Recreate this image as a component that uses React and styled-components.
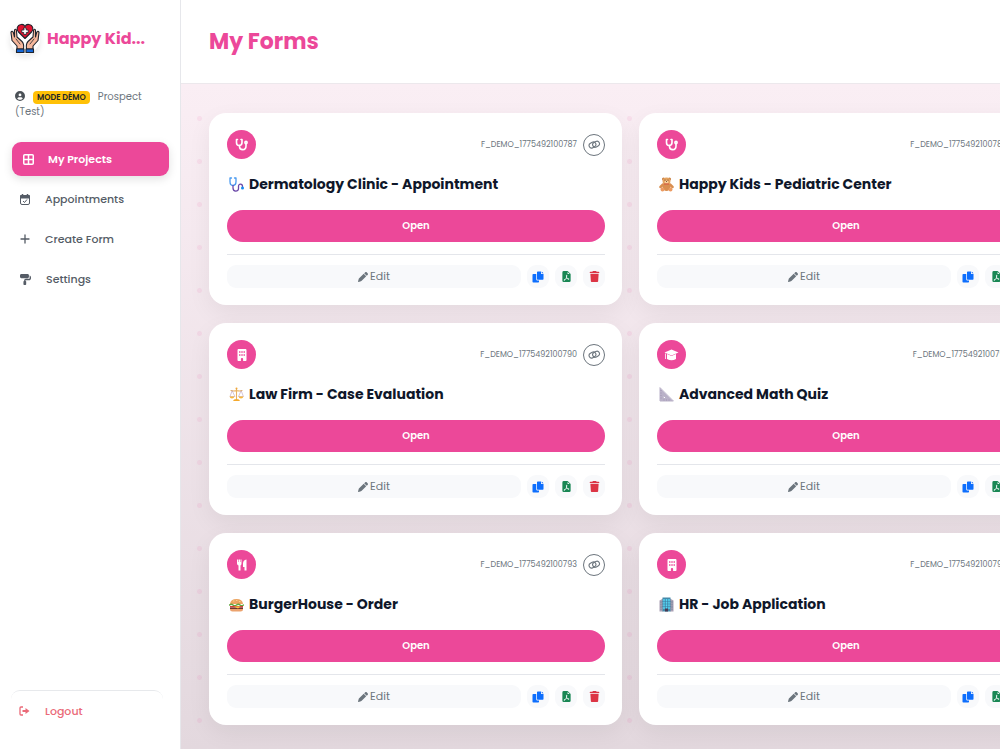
import React from "react";
import styled, { createGlobalStyle } from "styled-components";
import { FaBuilding, FaCircleUser, FaPaintRoller, FaPen, FaTrash } from "react-icons/fa6";
import { BsFileEarmarkPdfFill } from "react-icons/bs";

const pink = "#ec4899";

const GlobalStyle = createGlobalStyle`
  *, *::before, *::after { box-sizing: border-box; }
  body {
    margin: 0;
    overflow-x: hidden;
    background: #fff;
    color: #0f172a;
    font-family: Poppins, Inter, "Liberation Sans", sans-serif;
    font-size: 12px;
  }
  button { font: inherit; border: 0; cursor: pointer; }
  h1, h2, p { margin: 0; }
  svg { display: block; flex-shrink: 0; }
`;

const Shell = styled.div`
  display: flex;
  min-height: 100vh;
  overflow: hidden;
`;

const Sidebar = styled.aside`
  display: flex;
  flex: 0 0 181px;
  flex-direction: column;
  padding: 23px 11px 21px 10px;
  background: #fff;
  border-right: 1px solid #e6e7eb;
`;

const Brand = styled.div`
  display: flex;
  align-items: center;
  gap: 7px;
  color: ${pink};
  font-size: 16px;
  font-weight: 700;
  line-height: 31px;
  white-space: nowrap;
`;

const LogoDisc = styled.span`
  display: grid;
  place-items: center;
  width: 30px;
  height: 31px;
  border-radius: 50%;
  box-shadow: 0 3px 6px rgba(0, 0, 0, 0.1);
`;

const UserInfo = styled.p`
  margin: 35px 0 0;
  padding: 0 5px;
  color: #6c757d;
  font-size: 10px;
  line-height: 15px;

  svg {
    display: inline-block;
    margin-right: 8px;
    color: #4b5157;
    vertical-align: -1px;
  }
`;

const DemoBadge = styled.span`
  display: inline-block;
  margin-right: 8px;
  padding: 0 4px;
  border-radius: 4px;
  background: #ffc107;
  color: #212529;
  font-size: 8px;
  font-weight: 600;
  line-height: 13px;
`;

const Nav = styled.nav`
  display: flex;
  flex-direction: column;
  gap: 6px;
  margin: 23px 0 0 2px;
`;

const NavLink = styled.a`
  display: flex;
  align-items: center;
  gap: ${(p) => (p.$active ? 14 : 15)}px;
  height: 34px;
  padding-left: ${(p) => (p.$active ? 11 : 8)}px;
  border-radius: 9px;
  background: ${(p) => (p.$active ? pink : "transparent")};
  box-shadow: ${(p) => (p.$active ? "0 3px 10px rgba(0, 0, 0, 0.12)" : "none")};
  color: ${(p) => (p.$active ? "#fff" : p.$danger ? "#ea6a78" : "#555c66")};
  font-size: 11px;
  font-weight: ${(p) => (p.$active ? 600 : 500)};
  text-decoration: none;
`;

const LogoutArea = styled.div`
  margin: auto 6px 0 1px;
  padding-top: 3px;
  border-top: 1px solid #e7e9ec;
  border-radius: 9px;
`;

const Main = styled.main`
  display: flex;
  flex: 1;
  flex-direction: column;
  min-width: 0;
`;

const Header = styled.header`
  display: flex;
  align-items: center;
  height: 84px;
  padding: 0 28px;
  background: #fff;
  border-bottom: 1px solid #ece8ec;
`;

const PageTitle = styled.h1`
  color: ${pink};
  font-size: 22px;
  font-weight: 700;
  line-height: 32px;
`;

const Content = styled.section`
  flex: 1;
  padding: 29px 28px 24px;
  background-color: #ecdfe6;
  background-image:
    radial-gradient(circle, rgba(236, 72, 153, 0.09) 2px, transparent 3px),
    linear-gradient(180deg, #faeef4 0%, #e3d8de 100%);
  background-position: -3px 13px, 0 0;
  background-size: 43px 43px, 100% 100%;
`;

const Grid = styled.div`
  display: grid;
  grid-template-columns: repeat(2, minmax(413px, 1fr));
  gap: 18px 17px;
`;

const Card = styled.article`
  padding: 17px 17px 17px 18px;
  border-radius: 17px;
  background: #fff;
  box-shadow: 0 8px 24px rgba(0, 0, 0, 0.06);
`;

const CardTop = styled.div`
  display: flex;
  align-items: center;
  gap: 6px;
  height: 29px;
`;

const TypeIcon = styled.span`
  display: grid;
  place-items: center;
  width: 29px;
  height: 29px;
  margin-right: auto;
  border-radius: 50%;
  background: ${pink};
  color: #fff;
`;

const FormId = styled.span`
  color: #6c757d;
  font-size: 8px;
`;

const LinkButton = styled.button`
  display: grid;
  place-items: center;
  width: 22px;
  height: 22px;
  padding: 0;
  border: 1px solid #6c757d;
  border-radius: 50%;
  background: #fff;
  color: #6c757d;
`;

const CardTitle = styled.h2`
  display: flex;
  align-items: center;
  gap: 5px;
  margin: 14px 0 15px;
  padding-left: 2px;
  font-size: 14px;
  font-weight: 700;
  line-height: 22px;
  white-space: nowrap;
`;

const OpenButton = styled.button`
  display: block;
  width: 100%;
  height: 32px;
  border-radius: 16px;
  background: ${pink};
  color: #fff;
  font-size: 10px;
  font-weight: 600;
`;

const Actions = styled.div`
  display: flex;
  gap: 6px;
  margin-top: 12px;
  padding-top: 10px;
  border-top: 1px solid #e4e6eb;
`;

const ActionButton = styled.button`
  display: flex;
  flex: ${(p) => (p.$wide ? "1" : "0 0 22px")};
  align-items: center;
  justify-content: center;
  gap: 2px;
  height: 23px;
  padding: 0;
  border-radius: 9px;
  background: #f8f9fb;
  color: ${(p) => p.$tone};
  font-size: 11px;
`;

const Logo = () => (
  <svg width="30" height="31" viewBox="0 0 60 62" aria-hidden="true">
    <circle cx="30" cy="31" r="30" fill="#fff" />
    <g stroke="#20242c" strokeWidth="2.2" strokeLinejoin="round" strokeLinecap="round">
      <path d="M30 31 L17 18 C12 12 14 4 22 3 C26 2 29 5 30 7 C31 5 34 2 38 3 C46 4 48 12 43 18 Z" fill="#e0122f" />
      <path d="M27.5 10h5v4h4v5h-4v4h-5v-4h-4v-5h4z" fill="#fff" strokeWidth="1.6" />
      <path d="M14 52 V46 L4 35 L2 19 C3 15 6 16 7 20 L9 28 L9 15 C10 11 13 12 13 16 L14 28 L24 37 C28 41 28 45 27 52 Z" fill="#f7b89c" />
      <path d="M46 52 V46 L56 35 L58 19 C57 15 54 16 53 20 L51 28 L51 15 C50 11 47 12 47 16 L46 28 L36 37 C32 41 32 45 33 52 Z" fill="#f7b89c" />
      <path d="M12 32 L20 42 M48 32 L40 42" fill="none" strokeWidth="1.6" />
      <path d="M13 52h15v7H13zM32 52h15v7H32z" fill="#1467d8" />
    </g>
  </svg>
);

const GridIcon = () => (
  <svg width="11" height="11" viewBox="0 0 22 22" aria-hidden="true" fill="none" stroke="currentColor" strokeWidth="3">
    <rect x="1.5" y="1.5" width="19" height="19" rx="2" />
    <path d="M11 2v18M2 11h18" />
  </svg>
);

const CalendarIcon = () => (
  <svg width="10" height="11" viewBox="0 0 20 22" aria-hidden="true" fill="none" stroke="currentColor" strokeWidth="2">
    <rect x="1" y="3" width="18" height="18" rx="3" />
    <path d="M1 3h18v5H1z" fill="currentColor" />
    <path d="M5 0v4M15 0v4" strokeWidth="3" />
    <path d="M6 14l3 3 5-6" />
  </svg>
);

const PlusIcon = () => (
  <svg width="10" height="10" viewBox="0 0 20 20" aria-hidden="true" stroke="currentColor" strokeWidth="2.6" strokeLinecap="round">
    <path d="M10 2v16M2 10h16" />
  </svg>
);

const LogoutIcon = () => (
  <svg width="11" height="10" viewBox="0 0 22 20" aria-hidden="true" fill="none" stroke="currentColor" strokeWidth="2.6">
    <path d="M8 2H4Q2 2 2 4v12q0 2 2 2h4" />
    <path d="M7 8h6V4l8 6-8 6v-4H7z" fill="currentColor" stroke="none" />
  </svg>
);

const LinkIcon = () => (
  <svg width="13" height="11" viewBox="0 0 26 22" aria-hidden="true" fill="none" stroke="currentColor" strokeWidth="2.2">
    <g transform="rotate(-28 13 11)">
      <rect x="2" y="5" width="14" height="10" rx="5" />
      <rect x="9" y="7" width="14" height="10" rx="5" />
    </g>
  </svg>
);

const CopyIcon = () => (
  <svg width="12" height="12" viewBox="0 0 24 24" aria-hidden="true" fill="currentColor">
    <path d="M11.5 1H18v5h5v10q0 1.500-1.500 1.500h-10Q10 17.500 10 16V2.500Q10 1 11.500 1z" />
    <path d="M19.500 1L23 4.500h-3.500z" />
    <path d="M2.500 6h6v11q0 2 2 2H14v2.500q0 1.500-1.500 1.500h-10Q1 23 1 21.500v-14Q1 6 2.500 6z" />
  </svg>
);

const StethoscopeIcon = () => (
  <svg width="13" height="13" viewBox="0 0 26 26" aria-hidden="true" fill="none" stroke="currentColor" strokeWidth="3.2" strokeLinecap="round" strokeLinejoin="round">
    <path d="M5 3H3v6c0 4 2 6 5 6s6-2 6-6V3h-2" />
    <path d="M9 15v2c0 8 13 9 13-1v-4" />
    <circle cx="22" cy="9" r="2.200" />
  </svg>
);

const UtensilsIcon = () => (
  <svg width="12" height="12" viewBox="0 0 24 24" aria-hidden="true" fill="currentColor">
    <path d="M2 1h2v5h1V1h3v5h1V1h2v8q0 3-2 4v10H5V13Q2 12 2 9z" />
    <path d="M21 1v22h-4v-7h-3V9q0-7 7-8z" />
  </svg>
);

const GraduationIcon = () => (
  <svg width="15" height="12" viewBox="0 0 30 24" aria-hidden="true" fill="currentColor">
    <path d="M15 1l14 6-14 6L1 7z" />
    <path d="M6 10l9 4 9-4v10q-9 5-18 0z" />
    <path d="M3 9v11" fill="none" stroke="currentColor" strokeWidth="1.600" />
  </svg>
);

const BuildingIcon = () => <FaBuilding size={12} />;

const PictureSvg = ({ children }) => (
  <svg width="15" height="15" viewBox="0 0 30 30" aria-hidden="true" strokeLinecap="round" strokeLinejoin="round">
    {children}
  </svg>
);

const pictures = {
  stethoscope: (
    <PictureSvg>
      <path d="M5 2H2v7c0 5 3 8 6 8s6-3 6-8V2h-3" fill="none" stroke="#4a9af0" strokeWidth="2.6" />
      <path d="M8 17v5c0 8 11 8 11 1v-4c0-7 8-6 8 0v1" fill="none" stroke="#6b48a8" strokeWidth="2.6" />
      <circle cx="27" cy="22" r="3" fill="#168bf0" />
    </PictureSvg>
  ),
  bear: (
    <PictureSvg>
      <circle cx="9" cy="4" r="3" fill="#c47a3c" />
      <circle cx="21" cy="4" r="3" fill="#c47a3c" />
      <ellipse cx="15" cy="19" rx="8" ry="9" fill="#d98e4f" />
      <path d="M8 15l-5 5M22 15l5 5" stroke="#d98e4f" strokeWidth="5" />
      <ellipse cx="15" cy="8" rx="8" ry="7" fill="#e5a360" />
      <ellipse cx="15" cy="10" rx="4" ry="3" fill="#f7d09a" />
      <circle cx="7" cy="25" r="4" fill="#ec9b62" />
      <circle cx="23" cy="25" r="4" fill="#ec9b62" />
      <circle cx="12" cy="6" r="1" fill="#5b3325" />
      <circle cx="18" cy="6" r="1" fill="#5b3325" />
      <circle cx="15" cy="9" r="1" fill="#5b3325" />
      <path d="M11 14h8" stroke="#d04d3c" strokeWidth="2" />
    </PictureSvg>
  ),
  scales: (
    <PictureSvg>
      <path d="M15 3v22M4 7q6 2 11 0q6 2 11 0" fill="none" stroke="#e8b060" strokeWidth="2.2" />
      <path d="M6 8L2 19h9zM24 8l-5 11h9z" fill="none" stroke="#b99cc0" strokeWidth="1.2" />
      <path d="M1 19h10q-1 4-5 4t-5-4zM19 19h10q-1 4-5 4t-5-4z" fill="#f7b83d" />
      <path d="M8 28q1-4 7-4t7 4z" fill="#f4a92d" />
      <circle cx="15" cy="3" r="2" fill="#efa73b" />
    </PictureSvg>
  ),
  triangle: (
    <PictureSvg>
      <path d="M2 2v26h26zM9 17l6 6H9z" fill="#b9b1c8" fillRule="evenodd" stroke="#b9b1c8" strokeWidth="2" />
      <path d="M3 7h2M3 12h2M3 17h2M3 22h2M10 27v-2M15 27v-2M20 27v-2" stroke="#a095b2" strokeWidth="1" />
    </PictureSvg>
  ),
  burger: (
    <PictureSvg>
      <path d="M2 14Q3 4 15 4t13 10z" fill="#eca461" />
      <path d="M1 16q4-3 7 0t7 0 7 0 7 0" fill="none" stroke="#62a63d" strokeWidth="3" />
      <path d="M2 18h26v3H2z" fill="#d6403b" />
      <path d="M2 21h26v3H2z" fill="#71362d" />
      <path d="M10 19h13l-5 4z" fill="#ffc63d" />
      <path d="M2 24h26q0 5-5 5H7q-5 0-5-5z" fill="#eca36e" />
      <path d="M9 8h1M15 7h1M21 9h1" stroke="#ffe3a3" strokeWidth="1.5" />
    </PictureSvg>
  ),
  office: (
    <PictureSvg>
      <path d="M1 7l7-4v26H1zM29 7l-7-4v26h7z" fill="#aaa0b4" />
      <path d="M7 1h16v28H7z" fill="#438aaa" />
      <path d="M10 4v20M15 4v20M20 4v20" stroke="#56d3f3" strokeWidth="3" strokeLinecap="butt" />
      <path d="M7 9h16M7 14h16M7 19h16" stroke="#3978a0" strokeWidth="1" />
      <path d="M12 23h6v6h-6z" fill="#473b54" />
      <path d="M4 9v16M26 9v16" stroke="#74859d" strokeWidth="2" strokeDasharray="2 3" />
    </PictureSvg>
  ),
};

const forms = [
  { id: "F_DEMO_1775492100787", title: "Dermatology Clinic - Appointment", icon: StethoscopeIcon, picture: "stethoscope" },
  { id: "F_DEMO_1775492100788", title: "Happy Kids - Pediatric Center", icon: StethoscopeIcon, picture: "bear" },
  { id: "F_DEMO_1775492100790", title: "Law Firm - Case Evaluation", icon: BuildingIcon, picture: "scales" },
  { id: "F_DEMO_1775492100791", title: "Advanced Math Quiz", icon: GraduationIcon, picture: "triangle" },
  { id: "F_DEMO_1775492100793", title: "BurgerHouse - Order", icon: UtensilsIcon, picture: "burger" },
  { id: "F_DEMO_1775492100794", title: "HR - Job Application", icon: BuildingIcon, picture: "office" },
];

function FormCard({ form }) {
  const Icon = form.icon;
  return (
    <Card>
      <CardTop>
        <TypeIcon><Icon /></TypeIcon>
        <FormId>{form.id}</FormId>
        <LinkButton aria-label="Copy link"><LinkIcon /></LinkButton>
      </CardTop>
      <CardTitle>{pictures[form.picture]}{form.title}</CardTitle>
      <OpenButton>Open</OpenButton>
      <Actions>
        <ActionButton $wide $tone="#6c757d"><FaPen size={10} />Edit</ActionButton>
        <ActionButton $tone="#0d6efd" aria-label="Duplicate"><CopyIcon /></ActionButton>
        <ActionButton $tone="#198754" aria-label="Export PDF"><BsFileEarmarkPdfFill size={11} /></ActionButton>
        <ActionButton $tone="#dc3545" aria-label="Delete"><FaTrash size={11} /></ActionButton>
      </Actions>
    </Card>
  );
}

export default function App() {
  return (
    <>
      <GlobalStyle />
      <Shell>
        <Sidebar>
          <Brand><LogoDisc><Logo /></LogoDisc>Happy Kid...</Brand>
          <UserInfo>
            <FaCircleUser size={10} />
            <DemoBadge>MODE DÉMO</DemoBadge>
            Prospect (Test)
          </UserInfo>
          <Nav>
            <NavLink href="#projects" $active><GridIcon />My Projects</NavLink>
            <NavLink href="#appointments"><CalendarIcon />Appointments</NavLink>
            <NavLink href="#create"><PlusIcon />Create Form</NavLink>
            <NavLink href="#settings"><FaPaintRoller size={11} />Settings</NavLink>
          </Nav>
          <LogoutArea>
            <NavLink href="#logout" $danger><LogoutIcon />Logout</NavLink>
          </LogoutArea>
        </Sidebar>
        <Main>
          <Header><PageTitle>My Forms</PageTitle></Header>
          <Content>
            <Grid>
              {forms.map((form) => <FormCard key={form.id} form={form} />)}
            </Grid>
          </Content>
        </Main>
      </Shell>
    </>
  );
}
